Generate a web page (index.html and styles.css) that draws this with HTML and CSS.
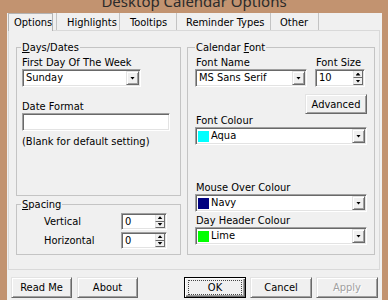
FILE: index.html
```html
<!DOCTYPE html>
<html lang="en">
<head>
<meta charset="UTF-8">
<title>Desktop Calendar Options</title>
<link rel="stylesheet" href="styles.css">
</head>
<body>
<div class="titlebar"><span>Desktop Calendar Options</span></div>
<div class="dialog">
  <div class="tabs">
    <div class="tab tab-options active">Options</div>
    <div class="tab tab-highlights">Highlights</div>
    <div class="tab tab-tooltips">Tooltips</div>
    <div class="tab tab-reminder">Reminder Types</div>
    <div class="tab tab-other">Other</div>
  </div>

  <div class="panel">
    <div class="col-left">
      <fieldset class="group group-dates">
        <legend><u>D</u>ays/Dates</legend>
        <div class="label">First Day Of The Week</div>
        <div class="combo combo-day"><span class="value">Sunday</span><span class="drop"><i></i></span></div>
        <div class="label label-format">Date Format</div>
        <div class="textbox"></div>
        <div class="hint">(Blank for default setting)</div>
      </fieldset>
      <fieldset class="group group-spacing">
        <legend><u>S</u>pacing</legend>
        <div class="spin-row">
          <span class="spin-label">Vertical</span>
          <div class="spin spin-small"><span class="value">0</span><span class="spin-btns"><span class="up"><i></i></span><span class="down"><i></i></span></span></div>
        </div>
        <div class="spin-row">
          <span class="spin-label">Horizontal</span>
          <div class="spin spin-small"><span class="value">0</span><span class="spin-btns"><span class="up"><i></i></span><span class="down"><i></i></span></span></div>
        </div>
      </fieldset>
    </div>

    <fieldset class="group group-font">
      <legend>Calendar <u>F</u>ont</legend>
      <div class="font-row">
        <div class="font-name">
          <div class="label">Font Name</div>
          <div class="combo"><span class="value">MS Sans Serif</span><span class="drop"><i></i></span></div>
        </div>
        <div class="font-size">
          <div class="label">Font Size</div>
          <div class="spin spin-size"><span class="value">10</span><span class="spin-btns"><span class="up"><i></i></span><span class="down"><i></i></span></span></div>
        </div>
      </div>
      <div class="advanced-row"><div class="btn btn-advanced">Advanced</div></div>
      <div class="label">Font Colour</div>
      <div class="combo"><span class="swatch aqua"></span><span class="value">Aqua</span><span class="drop"><i></i></span></div>
      <div class="label label-mouse">Mouse Over Colour</div>
      <div class="combo"><span class="swatch navy"></span><span class="value">Navy</span><span class="drop"><i></i></span></div>
      <div class="label label-header">Day Header Colour</div>
      <div class="combo"><span class="swatch lime"></span><span class="value">Lime</span><span class="drop"><i></i></span></div>
    </fieldset>
  </div>

  <div class="buttons">
    <div class="btn">Read Me</div>
    <div class="btn">About</div>
    <div class="btn btn-default btn-ok"><span>OK</span></div>
    <div class="btn">Cancel</div>
    <div class="btn disabled">Apply</div>
  </div>
</div>
</body>
</html>
```

FILE: styles.css
```css
body {
  margin: 0;
  width: 388px;
  height: 300px;
  overflow: hidden;
  background: #c29370;
  font-family: "DejaVu Sans Condensed", "DejaVu Sans", sans-serif;
  font-size: 11px;
  line-height: 13px;
  color: #000;
}
.titlebar {
  height: 13px;
  overflow: hidden;
  text-align: center;
}
.titlebar span {
  display: block;
  font-family: "Noto Sans", sans-serif;
  font-size: 15px;
  line-height: 20px;
  margin-top: -9px;
  color: #2b2b2b;
}
.dialog {
  margin-left: 7px;
  width: 375px;
  height: 287px;
  background: #f0f0f0;
}

/* tabs */
.tabs {
  display: flex;
  height: 17px;
  padding-left: 1px;
}
.tab {
  box-sizing: border-box;
  height: 17px;
  padding: 3px 0 0 10px;
  border-left: 1px solid #c3c3c3;
}
.tab.active {
  border: 1px solid #b4b4b4;
  border-bottom: none;
  padding: 2px 0 0 5px;
  height: 18px;
  background: #f0f0f0;
  position: relative;
  z-index: 1;
}
.tab-options { width: 45px; }
.tab-highlights { width: 63px; margin-left: 3px; }
.tab-tooltips { width: 57px; }
.tab-reminder { width: 94px; padding-left: 9px; }
.tab-other { width: 49px; padding-left: 9px; border-right: 1px solid #c3c3c3; }

/* tab page */
.panel {
  box-sizing: border-box;
  margin-left: 1px;
  width: 372px;
  height: 240px;
  border: 1px solid #d9d9d9;
  padding: 10px 0 0 7px;
  display: flex;
  gap: 6px;
}
.col-left {
  width: 165px;
  display: flex;
  flex-direction: column;
  gap: 2px;
}
.group {
  box-sizing: border-box;
  margin: 0;
  min-width: 0;
  border: 1px solid #c4c4c4;
  padding: 2px 5px 0;
}
.group legend {
  padding: 0 1px;
  margin-left: -1px;
  line-height: 13px;
}
.group-dates { height: 155px; }
.group-spacing { height: 57px; }
.group-font {
  width: 188px;
  height: 214px;
  padding: 2px 7px 0;
}
.group-font legend { margin-left: 0; }
.group-font .label { padding-left: 1px; }

.label-format { margin-top: 13px; }
.hint { margin-top: 4px; }
.label-mouse { margin-top: 36px; }
.label-header { margin-top: 2px; }

/* sunken fields */
.combo,
.textbox,
.spin {
  box-sizing: border-box;
  height: 18px;
  background: #fff;
  border: 1px solid;
  border-color: #a0a0a0 #fff #fff #a0a0a0;
  box-shadow: inset 1px 1px #696969, inset -1px -1px #e3e3e3;
  padding: 1px;
  display: flex;
  align-items: center;
}
.combo .value,
.spin .value {
  flex: 1;
  padding-left: 2px;
  line-height: 14px;
  white-space: nowrap;
  overflow: hidden;
}
.combo-day { width: 119px; }
.textbox { width: 148px; }

.drop,
.spin-btns span {
  box-sizing: border-box;
  background: #f0f0f0;
  border: 1px solid;
  border-color: #e3e3e3 #696969 #696969 #e3e3e3;
  box-shadow: inset 1px 1px #fff, inset -1px -1px #a0a0a0;
  display: flex;
  align-items: center;
  justify-content: center;
}
.drop {
  width: 13px;
  height: 14px;
}
.drop i,
.spin-btns .down i {
  display: block;
  width: 5px;
  height: 3px;
  background: #000;
  clip-path: polygon(0 0, 100% 0, 50% 100%);
}
.spin-btns .up i {
  display: block;
  width: 5px;
  height: 3px;
  background: #000;
  clip-path: polygon(50% 0, 100% 100%, 0 100%);
}
.spin-btns {
  display: flex;
  flex-direction: column;
  width: 10px;
  height: 14px;
}
.spin-btns span {
  height: 7px;
  border-width: 0 1px 1px 1px;
  box-shadow: none;
}
.spin-small { width: 46px; height: 17px; }
.spin-small .spin-btns { height: 13px; }
.spin-small .spin-btns span { height: 6.5px; }
.spin-size { width: 50px; }

.spin-row {
  display: flex;
  align-items: center;
  height: 17px;
  margin-bottom: 2px;
}
.spin-label {
  width: 77px;
  padding-left: 22px;
  box-sizing: border-box;
  flex: none;
  width: 99px;
}

.font-row {
  display: flex;
  gap: 8px;
}
.font-name { width: 112px; }
.font-size { width: 50px; }
.font-size .label { padding-left: 1px; }

.swatch {
  width: 11px;
  height: 11px;
  margin-left: 1px;
  margin-right: 0;
  flex: none;
}
.swatch.aqua { background: #00ffff; }
.swatch.navy { background: #000080; }
.swatch.lime { background: #00ff00; }

/* buttons */
.btn {
  box-sizing: border-box;
  height: 21px;
  width: 61px;
  border: 1px solid;
  border-color: #e3e3e3 #696969 #696969 #e3e3e3;
  box-shadow: inset 1px 1px #fff, inset -1px -1px #a0a0a0;
  background: #f0f0f0;
  display: flex;
  align-items: center;
  justify-content: center;
  line-height: 13px;
}
.advanced-row {
  display: flex;
  justify-content: flex-end;
  margin-top: 7px;
}
.btn-advanced {
  width: 62px;
  height: 20px;
}
.buttons {
  display: flex;
  gap: 5px;
  padding: 0 4px;
  margin-top: 7px;
}
.buttons .btn-ok {
  margin-left: auto;
  border-color: #000;
  box-shadow: inset 1px 1px #fff, inset -1px -1px #696969, inset -2px -2px #a0a0a0;
  width: 62px;
}
.btn-ok span {
  box-sizing: border-box;
  width: 54px;
  height: 15px;
  border: 1px dotted #444;
  text-align: center;
}
.buttons .btn:nth-child(4),
.buttons .btn:nth-child(5) {
  width: 62px;
  margin-left: -1px;
}
.btn.disabled {
  color: #a0a0a0;
  text-shadow: 1px 1px #fff;
}
```
